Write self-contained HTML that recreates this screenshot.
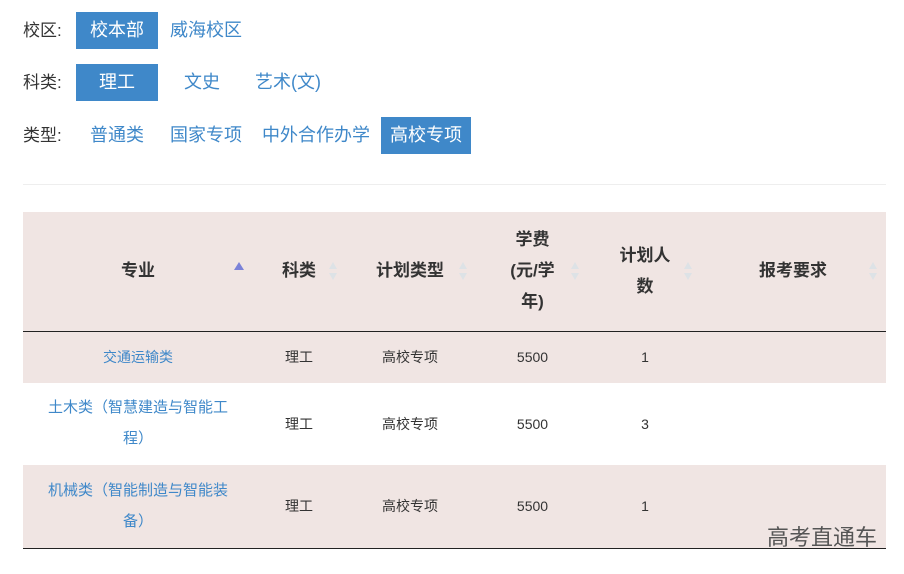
<!DOCTYPE html>
<html><head><meta charset="utf-8"><style>
body{margin:0;width:904px;height:574px;background:#fff;font-family:"Liberation Sans","Noto Sans CJK SC",sans-serif;position:relative;overflow:hidden}
.a{position:absolute}
.lab{font-size:17px;color:#333;height:37px;line-height:37px}
.opt{font-size:18px;color:#3f88c9;height:37px;line-height:37px;text-align:center}
.sel{background:#3f88c9;color:#fff}
.th{position:absolute;font-size:17px;font-weight:bold;color:#333;text-align:center;line-height:31px}
.td{position:absolute;font-size:14px;color:#333;text-align:center;line-height:32px}
.bl{color:#3f88c9}
.si{position:absolute;width:8px;height:18px}
</style></head><body>
<div class="a lab" style="left:23px;top:12px">校区:</div>
<div class="a opt sel" style="left:76px;top:12px;width:82px">校本部</div>
<div class="a opt" style="left:166px;top:12px;width:80px">威海校区</div>
<div class="a lab" style="left:23px;top:64px">科类:</div>
<div class="a opt sel" style="left:76px;top:64px;width:82px">理工</div>
<div class="a opt" style="left:172px;top:64px;width:60px">文史</div>
<div class="a opt" style="left:250px;top:64px;width:76px">艺术(文)</div>
<div class="a lab" style="left:23px;top:117px">类型:</div>
<div class="a opt" style="left:86px;top:117px;width:62px">普通类</div>
<div class="a opt" style="left:166px;top:117px;width:80px">国家专项</div>
<div class="a opt" style="left:260px;top:117px;width:112px">中外合作办学</div>
<div class="a opt sel" style="left:381px;top:117px;width:90px">高校专项</div>
<div class="a" style="left:23px;top:184px;width:863px;height:1px;background:#eee"></div>

<div class="a" style="left:23px;top:212px;width:863px;height:119px;background:#f0e5e3;border-bottom:1px solid #222"></div>
<div class="th" style="left:23px;top:255px;width:230px">专业</div>
<div class="th" style="left:253px;top:255px;width:92px">科类</div>
<div class="th" style="left:345px;top:255px;width:130px">计划类型</div>
<div class="th" style="left:475px;top:224px;width:115px">学费<br>(元/学<br>年)</div>
<div class="th" style="left:590px;top:240px;width:110px">计划人<br>数</div>
<div class="th" style="left:700px;top:255px;width:186px">报考要求</div>
<svg class="a" style="left:234px;top:262px" width="10" height="8"><path d="M5 0L10 8H0Z" fill="#7b82d8"/></svg>
<svg class="si" style="left:329px;top:262px" viewBox="0 0 8 18"><path d="M4 0L8 7H0ZM4 18L8 11H0Z" fill="#dde2e6"/></svg>
<svg class="si" style="left:459px;top:262px" viewBox="0 0 8 18"><path d="M4 0L8 7H0ZM4 18L8 11H0Z" fill="#dde2e6"/></svg>
<svg class="si" style="left:571px;top:262px" viewBox="0 0 8 18"><path d="M4 0L8 7H0ZM4 18L8 11H0Z" fill="#dde2e6"/></svg>
<svg class="si" style="left:684px;top:262px" viewBox="0 0 8 18"><path d="M4 0L8 7H0ZM4 18L8 11H0Z" fill="#dde2e6"/></svg>
<svg class="si" style="left:869px;top:262px" viewBox="0 0 8 18"><path d="M4 0L8 7H0ZM4 18L8 11H0Z" fill="#dde2e6"/></svg>

<div class="a" style="left:23px;top:332px;width:863px;height:51px;background:#f0e5e3"></div>
<div class="td bl" style="left:23px;top:341px;width:230px">交通运输类</div>
<div class="td" style="left:253px;top:341px;width:92px">理工</div>
<div class="td" style="left:345px;top:341px;width:130px">高校专项</div>
<div class="td" style="left:475px;top:341px;width:115px">5500</div>
<div class="td" style="left:590px;top:341px;width:110px">1</div>

<div class="td bl" style="left:38px;top:392px;width:200px;font-size:15px;line-height:31px">土木类（智慧建造与智能工<br>程）</div>
<div class="td" style="left:253px;top:408px;width:92px">理工</div>
<div class="td" style="left:345px;top:408px;width:130px">高校专项</div>
<div class="td" style="left:475px;top:408px;width:115px">5500</div>
<div class="td" style="left:590px;top:408px;width:110px">3</div>

<div class="a" style="left:23px;top:465px;width:863px;height:83px;background:#f0e5e3;border-bottom:1px solid #222"></div>
<div class="td bl" style="left:38px;top:475px;width:200px;font-size:15px;line-height:31px">机械类（智能制造与智能装<br>备）</div>
<div class="td" style="left:253px;top:490px;width:92px">理工</div>
<div class="td" style="left:345px;top:490px;width:130px">高校专项</div>
<div class="td" style="left:475px;top:490px;width:115px">5500</div>
<div class="td" style="left:590px;top:490px;width:110px">1</div>
<div class="a" style="left:767px;top:520px;font-size:22px;color:#555">高考直通车</div>
</body></html>
